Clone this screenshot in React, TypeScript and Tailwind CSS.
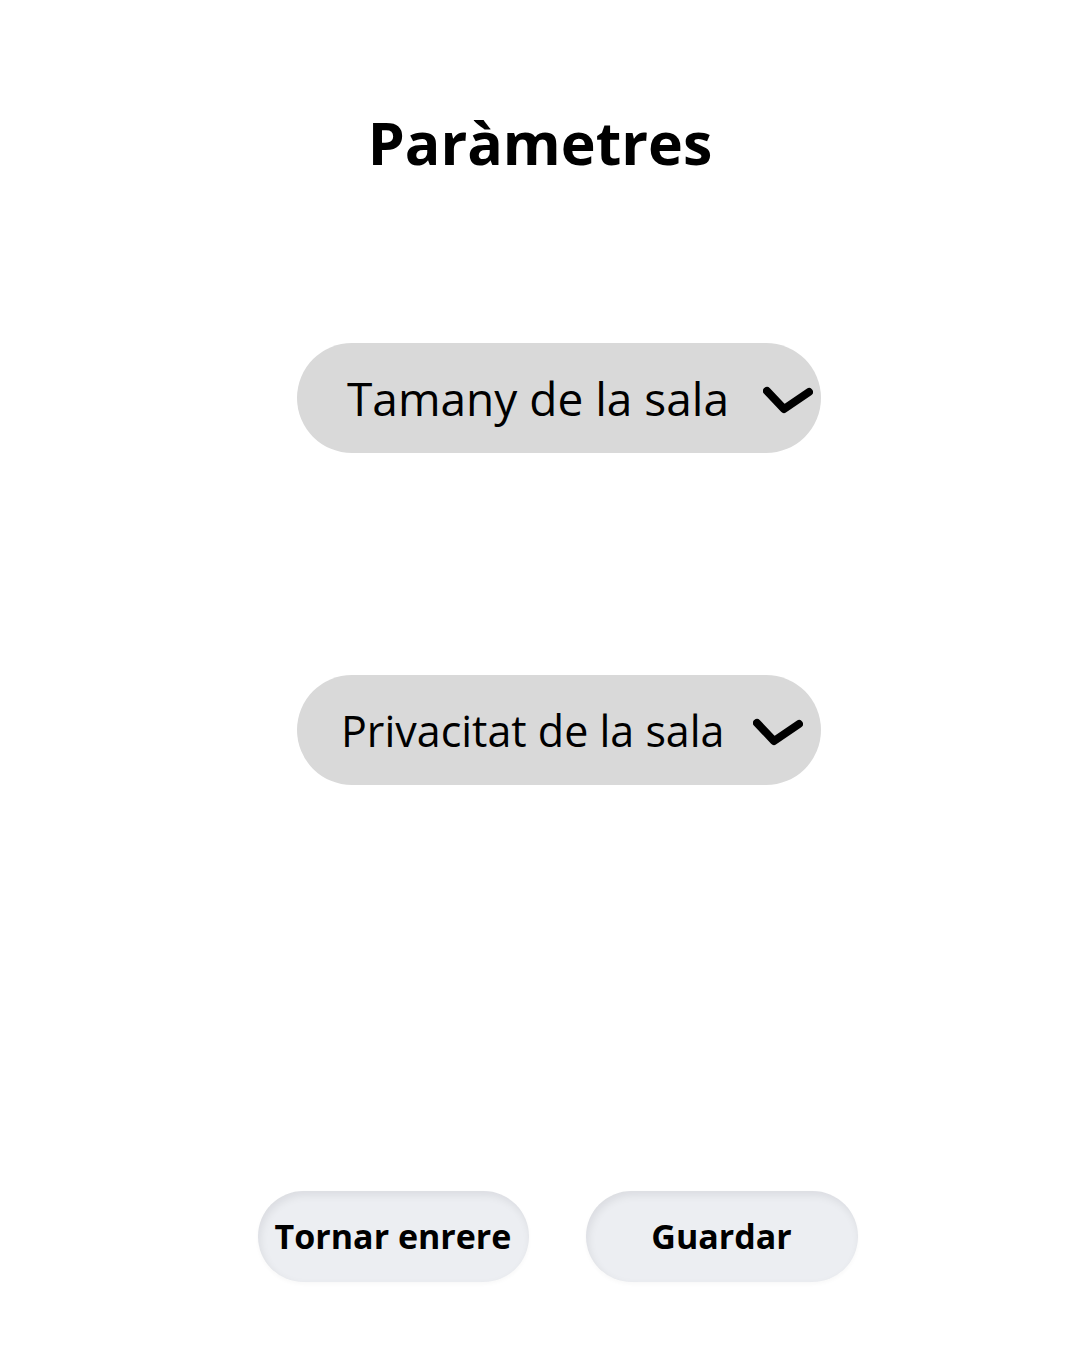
import { useState } from 'react';

function Chevron() {
  return (
    <svg width="50" height="30" viewBox="0 0 50 30" fill="none" className="mt-[4px] shrink-0">
      <path d="M4 6 L21 24 L46 7" stroke="#000" strokeWidth="8" strokeLinecap="round" strokeLinejoin="round" />
    </svg>
  );
}

function Select({ label, cls }: { label: string; cls: string }) {
  const [open, setOpen] = useState(false);
  return (
    <button
      type="button"
      onClick={() => setOpen(!open)}
      className={`flex h-[110px] w-[524px] items-center rounded-full bg-[#d9d9d9] ${cls}`}
    >
      <span className="whitespace-nowrap leading-none text-black">{label}</span>
      <Chevron />
    </button>
  );
}

export default function App() {
  return (
    <div
      className="flex h-[1350px] w-[1080px] flex-col items-center bg-white"
      style={{ fontFamily: '"Open Sans", "Liberation Sans", sans-serif' }}
    >
      <h1 className="mt-[113px] text-[59px] font-bold leading-none text-black">Paràmetres</h1>

      <div className="mt-[171px] flex flex-col gap-[222px] pl-[38px]">
        <Select label="Tamany de la sala" cls="gap-[34px] pl-[50px] text-[46px]" />
        <Select label="Privacitat de la sala" cls="gap-[28px] pl-[44px] text-[43px]" />
      </div>

      <div className="mt-[406px] flex gap-[57px] pl-[35px]">
        <button className="h-[91px] w-[271px] whitespace-nowrap rounded-full bg-[#eceef2] text-[34px] font-bold text-black shadow-[inset_2px_4px_8px_rgba(0,0,30,0.08),0_2px_4px_rgba(0,0,0,0.03)]">
          Tornar enrere
        </button>
        <button className="h-[91px] w-[272px] whitespace-nowrap rounded-full bg-[#eceef2] text-[34px] font-bold text-black shadow-[inset_2px_4px_8px_rgba(0,0,30,0.08),0_2px_4px_rgba(0,0,0,0.03)]">
          Guardar
        </button>
      </div>
    </div>
  );
}
